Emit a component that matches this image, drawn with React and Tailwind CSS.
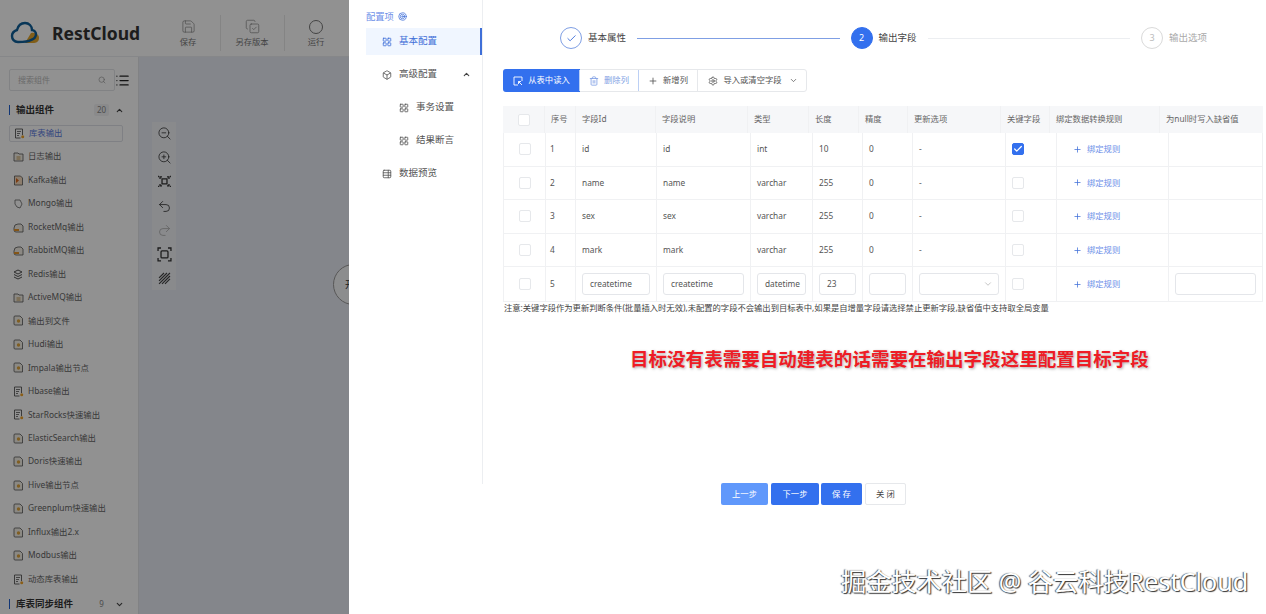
import React from 'react';
import { Save, CopyCheck, Search, List, ZoomOut, ZoomIn, Undo2, Redo2, ChevronUp, ChevronDown, Check, Plus, Trash2, Settings, Box, LayoutGrid, Target, TableProperties } from 'lucide-react';

const FONT = "font-['Noto_Sans','Noto_Sans_CJK_SC',sans-serif]";

const outputs = [
  ['库表输出', 'list'], ['日志输出', 'folder'], ['Kafka输出', 'orange'], ['Mongo输出', 'leaf'], ['RocketMq输出', 'mq'], ['RabbitMQ输出', 'mq'],
  ['Redis输出', 'stack'], ['ActiveMQ输出', 'folder'], ['输出到文件', 'doc'], ['Hudi输出', 'doc'], ['Impala输出节点', 'doc'], ['Hbase输出', 'list'],
  ['StarRocks快速输出', 'list'], ['ElasticSearch输出', 'doc'], ['Doris快速输出', 'doc'], ['Hive输出节点', 'doc'], ['Greenplum快速输出', 'doc'],
  ['Influx输出2.x', 'doc'], ['Modbus输出', 'doc'], ['动态库表输出', 'list'],
];

const rows = [
  { no: 1, id: 'id', desc: 'id', type: 'int', len: '10', prec: '0', key: true },
  { no: 2, id: 'name', desc: 'name', type: 'varchar', len: '255', prec: '0' },
  { no: 3, id: 'sex', desc: 'sex', type: 'varchar', len: '255', prec: '0' },
  { no: 4, id: 'mark', desc: 'mark', type: 'varchar', len: '255', prec: '0' },
];

const headers = ['序号', '字段Id', '字段说明', '类型', '长度', '精度', '更新选项', '关键字段', '绑定数据转换规则', '为null时写入缺省值'];

const Logo = () => (
  <svg width="31" height="24" viewBox="0 0 31 24" fill="none">
    <path d="M21 12c4-1 8 1 8 5s-3 5-6 5h-8z" fill="#e3a62c" />
    <path d="M8 21c-4 0-6-3-6-6s2-5 5-6c1-4 4-7 8-7 4 0 7 3 7 7 2 0 4 2 4 4 0 3-2 5-5 6-3 2-8 2-13 2z" stroke="#0f5f99" strokeWidth="2.4" />
  </svg>
);

// small component icons of the side list
const ItemIcon = ({ kind }) => (
  <svg width="11" height="11" viewBox="0 0 11 11" fill="none" className="shrink-0">
    {kind === 'leaf' && <path d="M2 2h5l2 4-2 4-3-1-2-3z" stroke="#666" strokeWidth="0.8" />}
    {kind === 'stack' && <path d="M1 3l4-2 4 2-4 2zM1 5.5l4 2 4-2M1 8l4 2 4-2" stroke="#555" strokeWidth="1" />}
    {kind === 'mq' && <path d="M1 6a4 4 0 0 1 4-4h3l2 2v6H3a2 2 0 0 1-2-2z" fill="#f4f0e6" stroke="#555" strokeWidth="0.8" />}
    {kind === 'mq' && <path d="M1 7h5v2H1z" fill="#e8962a" />}
    {kind === 'folder' && <path d="M1 2h4l1 1h4v7H1z" stroke="#555" strokeWidth="0.8" fill="#f3efe6" />}
    {kind === 'folder' && <path d="M3.5 6h4M3.5 8h4" stroke="#b8862e" strokeWidth="0.8" />}
    {kind === 'orange' && <path d="M1.5 1h6l2 2v7h-8z" fill="#f7dcc0" stroke="#555" strokeWidth="0.8" />}
    {kind === 'orange' && <path d="M3 3l3 2.5L3 8z" fill="#d9691f" />}
    {kind === 'doc' && <path d="M2 1h5l2.5 2.5V10H2a1 1 0 0 1-1-1V2a1 1 0 0 1 1-1z" fill="#f4f1e8" stroke="#555" strokeWidth="0.8" />}
    {kind === 'doc' && <circle cx="5.5" cy="6" r="1.7" fill="#e2a63c" />}
    {kind === 'list' && <path d="M1.5 1h7v6M8.500 1M1.500 1v9h5" stroke="#555" strokeWidth="0.9" />}
    {kind === 'list' && <path d="M3 3.500h4M3 5.500h3M3 7.500h2" stroke="#555" strokeWidth="0.8" />}
    {kind === 'list' && <circle cx="8.700" cy="8.700" r="1.500" fill="#f2a52b" />}
  </svg>
);

const FitIcon = () => (
  <svg width="15" height="15" viewBox="0 0 15 15" fill="none" stroke="#333" strokeWidth="1.300">
    <path d="M5 5h5v5H5zM3 5V3h2M12 5V3h-2M3 10v2h2M12 10v2h-2" />
    <path d="M1 2.500h1M13 2.500h1M1 12.500h1M13 12.500h1" />
  </svg>
);

const FrameIcon = () => (
  <svg width="15" height="15" viewBox="0 0 15 15" fill="none" stroke="#333" strokeWidth="1.300">
    <path d="M1 4V1h3M11 1h3v3M1 11v3h3M11 14h3v-3" />
    <rect x="4" y="4" width="7" height="7" rx="1" />
  </svg>
);

const ReadIcon = () => (
  <svg width="10" height="10" viewBox="0 0 10 10" fill="none" stroke="white" strokeWidth="0.9">
    <path d="M9 5V1H1v8h4" />
    <path d="M5.500 5.500 9 9M5.500 5.500h2.500M5.500 5.500V8" />
  </svg>
);

const ToolButton = ({ icon, label }) => (
  <div className="flex w-[60px] flex-col items-center text-[8.3px] leading-[11px] text-[#777]">
    {icon}
    <span className="mt-[2px]">{label}</span>
  </div>
);

const Divider = () => <div className="mx-[1.5px] h-[36px] w-[1px] bg-[#e8e8e8]" />;

const CheckBox = ({ on }) => (
  <span className={`flex h-[12px] w-[12px] items-center justify-center rounded-[2px] border ${on ? 'border-[#3370ee] bg-[#3370ee]' : 'border-[#e6e8eb] bg-white'}`}>
    {on && <Check size={10} strokeWidth={3} className="text-white" />}
  </span>
);

const Field = ({ value }) => (
  <div className="flex h-[22px] w-full items-center rounded-[3px] border border-[#e4e6ea] bg-white pl-[7px] text-[#555]">{value}</div>
);

const Cell = ({ children, className = '' }) => (
  <div className={`flex items-center border-l border-[#f0f1f3] px-[6px] ${className}`}>{children}</div>
);

const BindRule = () => (
  <div className="flex items-center gap-[5px] pl-[10px] text-[#6d8fe8]">
    <Plus size={9} className="text-[#3f6fd8]" />
    <span>绑定规则</span>
  </div>
);

const Step = ({ mark, label, tone }) => (
  <div className="flex shrink-0 items-center gap-[6px]">
    <span className={`flex h-[22px] w-[22px] items-center justify-center rounded-full border text-[9px] ${tone === 'done' ? 'border-[#7f9fe4] text-[#3f6fd8]' : tone === 'on' ? 'border-[#3370ee] bg-[#3370ee] text-white' : 'border-[#dadada] text-[#bbb]'}`}>{mark}</span>
    <span className={`text-[9.5px] ${tone === 'off' ? 'text-[#aaa]' : 'text-[#444]'}`}>{label}</span>
  </div>
);

const BODY_COLS = 'grid h-[33.6px] grid-cols-[41px_30px_81px_94px_62px_50px_50px_93px_51px_112px_94px]';

export default function App() {
  return (
    <div className={`${FONT} relative flex h-[614px] w-[1266px] overflow-hidden bg-white`}>
      {/* page under the drawer */}
      <div className="relative flex w-[349px] shrink-0 flex-col overflow-hidden bg-white">
        <div className="flex h-[57px] shrink-0 items-center border-b border-[#eceef1] pl-[10px] pt-[10px]">
          <Logo />
          <span className="ml-[11px] w-[106px] text-[17.5px] font-bold text-[#333]">RestCloud</span>
          <ToolButton icon={<Save size={15} strokeWidth={1} />} label="保存" />
          <Divider />
          <ToolButton icon={<CopyCheck size={15} strokeWidth={1} />} label="另存版本" />
          <Divider />
          <ToolButton icon={<span className="h-[14px] w-[14px] rounded-full border border-[#777]" />} label="运行" />
        </div>
        <div className="flex min-h-0 flex-1">
          <div className="w-[139px] shrink-0 border-r border-[#e3e5e8] pl-[9px]">
            <div className="flex items-center pt-[12px]">
              <div className="flex h-[22px] w-[106px] items-center justify-between rounded-[2px] border border-[#e3e5e8] px-[8px] text-[8px] text-[#bbb]">
                <span>搜索组件</span>
                <Search size={8} className="text-[#999]" />
              </div>
              <List size={15} className="text-[#222]" />
            </div>
            <div className="mt-[9px] flex h-[20px] items-center">
              <span className="mr-[6px] h-[10px] w-[1px] bg-[#1f5fd0]" />
              <span className="w-[78px] text-[9.5px] font-bold text-[#333]">输出组件</span>
              <span className="w-[15px] rounded-[2px] bg-[#f2f3f5] text-center text-[8px] text-[#888]">20</span>
              <ChevronUp size={9} strokeWidth={3} className="ml-[6px] text-[#444]" />
            </div>
            <div className="mt-[1.5px]">
              {outputs.map(([name, kind], i) => (
                <div key={name} className={`flex h-[23.47px] w-[114px] items-center gap-[4px] pl-[4px] text-[8.4px] ${i === 0 ? 'text-[#5b7be0]' : 'text-[#666]'}`}>
                  {i === 0 ? (
                    <div className="-ml-[4px] flex h-[17px] w-[114px] items-center gap-[4px] rounded-[2px] border border-[#dfe2e8] pl-[4px]"><ItemIcon kind={kind} /><span>{name}</span></div>
                  ) : (
                    <><ItemIcon kind={kind} /><span className="whitespace-nowrap">{name}</span></>
                  )}
                </div>
              ))}
            </div>
            <div className="mt-[3.5px] flex h-[20px] items-center">
              <span className="mr-[6px] h-[10px] w-[1px] bg-[#1f5fd0]" />
              <span className="w-[78px] whitespace-nowrap text-[9.5px] font-bold text-[#333]">库表同步组件</span>
              <span className="w-[15px] text-center text-[8px] text-[#888]">9</span>
              <ChevronDown size={9} strokeWidth={3} className="ml-[6px] text-[#444]" />
            </div>
          </div>
          <div className="flex-1 bg-[#e8ebf4]">
            <div className="ml-[13px] mt-[65px] flex h-[168px] w-[24px] flex-col items-center gap-[9.3px] bg-[#f1f3f7] py-[4px] text-[#333]">
              <ZoomOut size={15} strokeWidth={1.3} />
              <ZoomIn size={15} strokeWidth={1.3} />
              <FitIcon />
              <Undo2 size={15} strokeWidth={1.3} />
              <Redo2 size={15} strokeWidth={1.3} className="text-[#aaa]" />
              <FrameIcon />
              <svg width="15" height="15" viewBox="0 0 15 15" stroke="#444" strokeWidth="1.200"><path d="M2 7 7 2M2 10l8-8M2 13 13 2M5 13l8-8M8 13l5-5" /></svg>
            </div>
          </div>
        </div>
        {/* node on the canvas */}
        <div className="absolute left-[333px] top-[264px] flex h-[41px] w-[41px] items-center rounded-full border border-[#999] bg-[#f7f8fa] pl-[11px] text-[9px] text-[#333]">开</div>
        <div className="absolute inset-0 bg-black/43" />
      </div>

      {/* drawer */}
      <div className="flex min-w-0 flex-1">
        <div className="h-[484px] w-[134px] shrink-0 border-r border-[#eceef1] pl-[17px] text-[9.5px] text-[#555]">
          <div className="flex h-[27px] items-center gap-[4px] pt-[6px] text-[9.3px] text-[#6d8fe8]">
            配置项 <Target size={9} className="text-[#3f6fd8]" />
          </div>
          <div className="mt-px flex h-[27px] items-center gap-[7px] border-r-2 border-[#3f6fd8] bg-[#f0f6ff] pl-[16px] text-[#3f6fd8]">
            <LayoutGrid size={10} />基本配置
          </div>
          <div className="mt-[6px] flex h-[27px] items-center gap-[7px] pl-[16px]">
            <Box size={10} />高级配置
            <ChevronUp size={9} strokeWidth={3} className="ml-[18px] text-[#444]" />
          </div>
          <div className="mt-[6px] flex h-[27px] items-center gap-[7px] pl-[33px]"><LayoutGrid size={10} />事务设置</div>
          <div className="mt-[6px] flex h-[27px] items-center gap-[7px] pl-[33px]"><LayoutGrid size={10} />结果断言</div>
          <div className="mt-[6px] flex h-[27px] items-center gap-[7px] pl-[16px]"><TableProperties size={10} />数据预览</div>
        </div>

        <div className="min-w-0 flex-1 pl-[20px]">
          <div className="flex h-[69px] items-center pl-[57px] pr-[59px] pt-[7px]">
            <Step mark={<Check size={11} />} label="基本属性" tone="done" />
            <span className="mx-[11px] h-[1px] flex-1 bg-[#7f9fe4]" />
            <Step mark="2" label="输出字段" tone="on" />
            <span className="mx-[11px] h-[1px] flex-1 bg-[#eceef1]" />
            <Step mark="3" label="输出选项" tone="off" />
          </div>

          <div className="flex h-[23px] w-[304px] rounded-[3px] border border-[#e6e8eb] text-[8.300px] text-[#555]">
            <button className="-m-px flex w-[77px] items-center justify-center gap-[5px] rounded-l-[3px] bg-[#3370ee] text-white"><ReadIcon />从表中读入</button>
            <button className="flex w-[60px] items-center justify-center gap-[5px] border border-y-0 border-[#bcd0f5] text-[#7f9fe4]"><Trash2 size={10} />删除列</button>
            <button className="flex w-[59px] items-center justify-center gap-[5px] border-r border-[#e6e8eb]"><Plus size={10} />新增列</button>
            <button className="flex flex-1 items-center justify-center gap-[5px] pl-[2px]"><Settings size={10} />导入或清空字段<ChevronDown size={9} className="ml-[2px]" /></button>
          </div>

          <div className="mt-[14px] w-[760px] rounded-[2px] text-[8.300px] text-[#555]">
            <div className="grid h-[27px] grid-cols-[41px_31px_80px_92px_61px_50px_49px_93px_49px_110px_91px_13px] bg-[#f6f7f9] text-[#666]">
              <div className="flex items-center justify-center"><CheckBox /></div>
              {headers.map((h) => (
                <Cell key={h} className="whitespace-nowrap">{h}</Cell>
              ))}
            </div>
            <div className="border border-t-0 border-[#f0f1f3]">
              {rows.map((r) => (
                <div key={r.no} className={`${BODY_COLS} border-b border-[#f0f1f3]`}>
                  <div className="flex items-center justify-center"><CheckBox /></div>
                  <Cell className="!pl-[4px]">{r.no}</Cell>
                  <Cell>{r.id}</Cell>
                  <Cell>{r.desc}</Cell>
                  <Cell>{r.type}</Cell>
                  <Cell>{r.len}</Cell>
                  <Cell>{r.prec}</Cell>
                  <Cell>-</Cell>
                  <Cell><CheckBox on={r.key} /></Cell>
                  <Cell><BindRule /></Cell>
                  <Cell />
                </div>
              ))}
              <div className={BODY_COLS}>
                <div className="flex items-center justify-center"><CheckBox /></div>
                <Cell className="!pl-[4px]">5</Cell>
                <Cell><Field value="createtime" /></Cell>
                <Cell><Field value="createtime" /></Cell>
                <Cell><Field value="datetime" /></Cell>
                <Cell><Field value="23" /></Cell>
                <Cell><Field value="" /></Cell>
                <Cell>
                  <div className="flex h-[22px] w-full items-center justify-end rounded-[3px] border border-[#e4e6ea] pr-[5px]"><ChevronDown size={10} className="text-[#bbb]" /></div>
                </Cell>
                <Cell><CheckBox /></Cell>
                <Cell><BindRule /></Cell>
                <Cell><Field value="" /></Cell>
              </div>
            </div>
          </div>

          <p className="-mt-px whitespace-nowrap pl-[1px] text-[8.300px] leading-[14px] text-[#444]">注意:关键字段作为更新判断条件(批量插入时无效),未配置的字段不会输出到目标表中,如果是自增量字段请选择禁止更新字段,缺省值中支持取全局变量</p>

          <p className="mt-[31px] whitespace-nowrap pl-[127px] text-[18.550px] font-bold leading-[26px] text-[#ee1c25] [text-shadow:1px_1px_3px_rgba(0,0,0,0.35)]">目标没有表需要自动建表的话需要在输出字段这里配置目标字段</p>

          <div className="mt-[111px] flex gap-[3px] pl-[218px] text-[8.300px]">
            <button className="h-[22px] w-[47px] rounded-[2px] bg-[#6098fb] text-white">上一步</button>
            <button className="h-[22px] w-[48px] rounded-[2px] bg-[#3370ee] text-white">下一步</button>
            <button className="-ml-px h-[22px] w-[41px] rounded-[2px] bg-[#3370ee] text-white">保 存</button>
            <button className="h-[22px] w-[41px] rounded-[2px] border border-[#e6e8eb] bg-white text-[#444]">关 闭</button>
          </div>
        </div>
      </div>

      {/* watermark */}
      <div className="absolute left-[841px] top-[563px] whitespace-nowrap text-[25.200px] leading-[36px] text-white [text-shadow:1px_1px_1px_#333,-1px_0_1px_#555]">掘金技术社区 @ 谷云科技RestCloud</div>
    </div>
  );
}
